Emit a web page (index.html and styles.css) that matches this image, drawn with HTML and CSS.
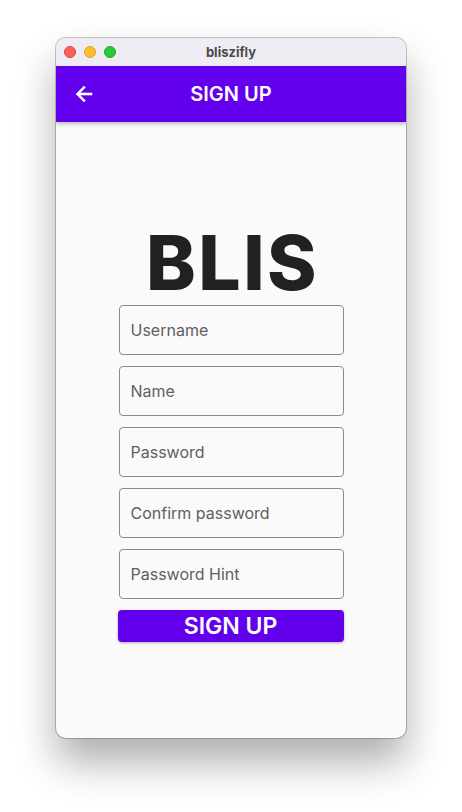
FILE: index.html
```html
<!DOCTYPE html>
<html>
<head>
<meta charset="utf-8">
<link rel="stylesheet" href="styles.css">
</head>
<body>
<div class="window">
  <div class="titlebar">
    <div class="lights">
      <span class="light red"></span>
      <span class="light yellow"></span>
      <span class="light green"></span>
    </div>
    <div class="title">bliszifly</div>
  </div>
  <div class="appbar">
    <svg class="back" width="24" height="24" viewBox="0 0 24 24"><path d="M20 11H7.83l5.59-5.59L12 4l-8 8 8 8 1.41-1.41L7.83 13H20v-2z" fill="#fff" stroke="#fff" stroke-width="0.6"/></svg>
    <div class="apptitle">SIGN UP</div>
  </div>
  <div class="content">
    <div class="form">
      <div class="logo">BLIS</div>
      <div class="field">Username</div>
      <div class="field">Name</div>
      <div class="field">Password</div>
      <div class="field">Confirm password</div>
      <div class="field">Password Hint</div>
      <div class="button">SIGN UP</div>
    </div>
  </div>
</div>
</body>
</html>
```
FILE: styles.css
```css
html, body {
  margin: 0;
  padding: 0;
  background: #ffffff;
}
body {
  padding-top: 38px;
  padding-left: 56px;
  min-height: 812px;
  box-sizing: border-box;
  font-family: Inter, "Noto Sans", sans-serif;
}
.window {
  width: 350px;
  height: 700px;
  border-radius: 10px;
  overflow: hidden;
  background: #fafafa;
  box-shadow: 0 0 0 1px rgba(0,0,0,0.22), 0 24px 40px rgba(0,0,0,0.32);
  display: flex;
  flex-direction: column;
}
.titlebar {
  height: 28px;
  background: #efedf3;
  position: relative;
  display: flex;
  align-items: center;
  justify-content: center;
  flex-shrink: 0;
}
.lights {
  position: absolute;
  left: 8px;
  top: 8px;
  display: flex;
  gap: 8px;
}
.light {
  width: 12px;
  height: 12px;
  border-radius: 50%;
  box-sizing: border-box;
}
.red { background: #fe5f57; border: 0.5px solid #e0443e; }
.yellow { background: #febc2e; border: 0.5px solid #dea123; }
.green { background: #28c840; border: 0.5px solid #1aab29; }
.title {
  font-size: 13px;
  font-weight: 700;
  color: #4b4b4b;
}
.appbar {
  height: 56px;
  background: #6200ee;
  display: flex;
  align-items: center;
  position: relative;
  box-shadow: 0 2px 4px rgba(0,0,0,0.25);
  z-index: 1;
  flex-shrink: 0;
}
.back {
  position: absolute;
  left: 16px;
  top: 16px;
}
.apptitle {
  flex: 1;
  text-align: center;
  color: #fff;
  font-size: 20px;
  font-weight: 600;
}
.content {
  flex: 1;
  display: flex;
  justify-content: center;
}
.form {
  width: 225px;
  padding-top: 98px;
  display: flex;
  flex-direction: column;
}
.logo {
  font-size: 75px;
  font-weight: 800;
  color: #212121;
  text-align: center;
  line-height: 86px;
  margin-bottom: -1px;
  letter-spacing: 2.5px;
  padding-left: 3px;
}
.field {
  height: 50px;
  box-sizing: border-box;
  border: 1px solid #8a8a8a;
  border-radius: 4px;
  padding-left: 11px;
  display: flex;
  align-items: center;
  font-size: 16px;
  color: #5f5f5f;
  margin-bottom: 11px;
}
.button {
  height: 32px;
  margin-left: -1px;
  background: #6200ee;
  border-radius: 4px;
  color: #fff;
  font-size: 23px;
  font-weight: 600;
  display: flex;
  align-items: center;
  justify-content: center;
  box-shadow: 0 1px 3px rgba(0,0,0,0.3);
}
```
